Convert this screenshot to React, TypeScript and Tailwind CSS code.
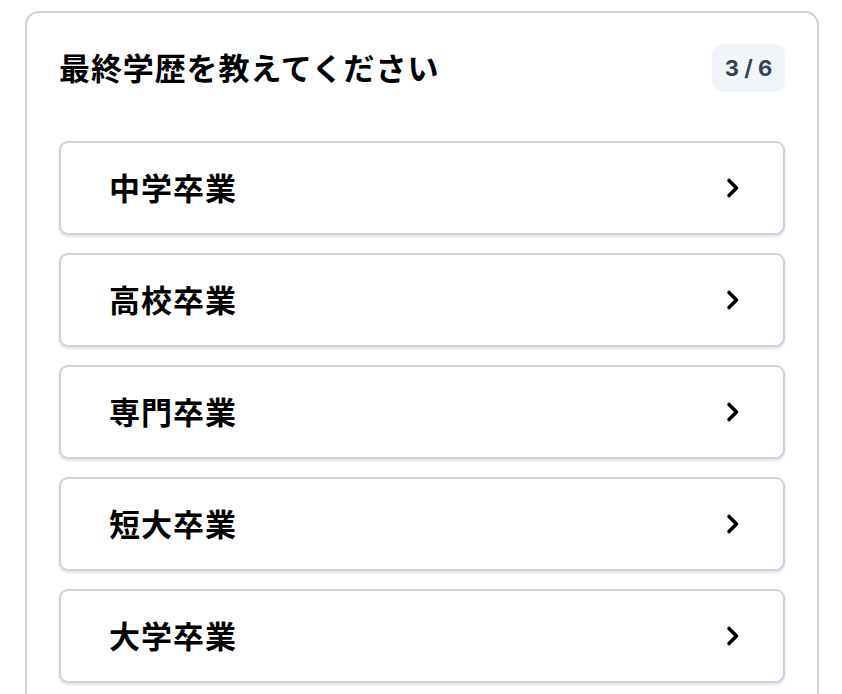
import React from 'react';

const options = ['中学卒業', '高校卒業', '専門卒業', '短大卒業', '大学卒業'];

const Chevron = () => (
  <svg width="18" height="24" viewBox="0 0 18 24" fill="none" className="shrink-0">
    <path d="M5 4.5 L12.5 12 L5 19.5" stroke="#000" strokeWidth="3.6" strokeLinecap="round" strokeLinejoin="round" />
  </svg>
);

const App: React.FC = () => {
  return (
    <div
      className="min-h-screen bg-white pt-[11px] pl-[25px] pr-[23px]"
      style={{ fontFamily: '"Noto Sans CJK JP", "Noto Sans", sans-serif' }}
    >
      <div className="rounded-[14px] border-2 border-[#c8d2de] px-[32px] pt-[31px] pb-[30px]">
        {/* Header */}
        <div className="flex items-center justify-between h-[48px]">
          <h1 className="mb-[4px] text-[31px] font-bold text-black tracking-[0.9px] leading-none">最終学歴を教えてください</h1>
          <span
            className="h-[48px] w-[73px] flex items-center justify-center rounded-[11px] bg-[#f1f5f9] text-[22px] font-bold text-[#334155]"
            style={{ fontFamily: 'Inter, "Liberation Sans", sans-serif' }}
          >
            3 / 6
          </span>
        </div>

        {/* Options */}
        <div className="mt-[49px] flex flex-col gap-[18px]">
          {options.map((opt) => (
            <button
              key={opt}
              className="h-[94px] w-full flex items-center justify-between rounded-[9px] border-2 border-[#c8d2de] bg-white pl-[48px] pr-[41px] shadow-[0_2px_3px_rgba(15,23,42,0.12)]"
            >
              <span className="mb-[4px] text-[31px] font-bold text-black tracking-[1px] leading-none">{opt}</span>
              <Chevron />
            </button>
          ))}
        </div>
      </div>
    </div>
  );
};

export default App;
